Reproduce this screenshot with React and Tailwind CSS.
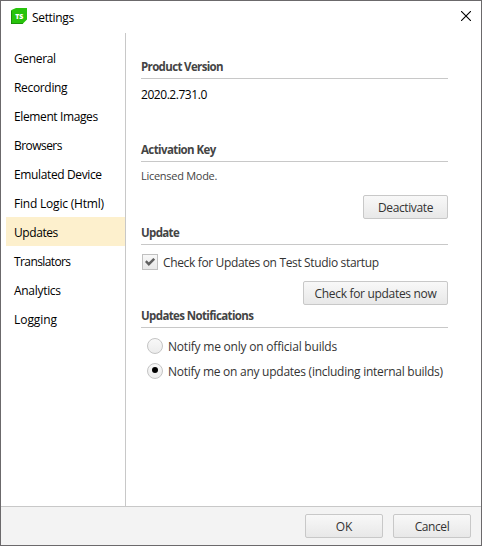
import React from "react";

const NAV = [
  ["General", "tracking-[-0.35px]"],
  ["Recording", "tracking-[-0.33px]"],
  ["Element Images", "tracking-[-0.38px]"],
  ["Browsers", "tracking-[-0.55px]"],
  ["Emulated Device", "tracking-[-0.37px]"],
  ["Find Logic (Html)", "tracking-[-0.2px]"],
  ["Updates", "tracking-[-0.42px]"],
  ["Translators", "tracking-[-0.6px]"],
  ["Analytics", "tracking-[-0.3px]"],
  ["Logging", "tracking-[-0.05px]"],
];

function Button({ className, children }) {
  return (
    <button
      className={`flex h-6 items-center justify-center whitespace-nowrap rounded-[2px] border border-[#c8c8c8] bg-linear-to-b from-[#f8f8f8] to-[#e8e8e8] pt-0.5 text-[#333333] ${className}`}
    >
      {children}
    </button>
  );
}

function Section({ title, titleClass, children }) {
  return (
    <section className="h-[83px] w-[307px]">
      <h2 className={`h-[25px] border-b border-[#c8c8c8] pt-px text-[11.5px] leading-[24px] font-bold text-[#444444] ${titleClass}`}>
        {title}
      </h2>
      {children}
    </section>
  );
}

function Radio({ checked, children, className }) {
  return (
    <label className={`flex h-[25px] items-center gap-[5px] pl-1.5 text-[#333333] ${className}`}>
      <span className="flex size-4 shrink-0 items-center justify-center rounded-full border border-[#c4c4c4] bg-linear-to-b from-[#f8f8f8] to-[#ececec]">
        {checked && <span className="mb-0.5 size-1.5 rounded-full bg-black" />}
      </span>
      <span className="pt-0.5">{children}</span>
    </label>
  );
}

export default function App() {
  return (
    <div className="flex h-[546px] w-[482px] flex-col overflow-hidden border border-[#6b696b] bg-white font-['Open_Sans','Noto_Sans',sans-serif] text-[12px] leading-[16px] whitespace-nowrap text-black">
      <header className="flex h-8 shrink-0 items-center pr-[10px] pl-[10px]">
        <svg width="16" height="16" viewBox="0 0 16 16" className="-mt-0.5">
          <path d="M5 0H16V11.5L11.5 16H0V3Q0 2 1 1.7Z" fill="#28c30c" />
          <path d="M0 3L.8 2.5V15.2H12.3L11.5 16H0Z" fill="#168507" />
          <text x="8.3" y="10.8" textAnchor="middle" fontSize="7" fontWeight="800" fill="white">TS</text>
        </svg>
        <span className="mt-px ml-[5px] tracking-[-0.33px]">Settings</span>
        <svg width="10" height="10" viewBox="0 0 10 10" className="ml-auto -mt-0.5" fill="none" stroke="black" strokeWidth="1.1">
          <path d="M0 0L10 10M10 0L0 10" />
        </svg>
      </header>

      <main className="flex min-h-0 flex-1">
        <nav className="w-[125px] shrink-0 border-r border-[#c8c8c8] pt-[10px] pl-[5px]">
          {NAV.map(([name, tracking]) => (
            <div
              key={name}
              className={`flex h-[29px] items-center pt-0.5 pl-2 ${tracking} ${name === "Updates" ? "bg-[#fdf0cd]" : ""}`}
            >
              {name}
            </div>
          ))}
        </nav>

        <div className="pt-[21px] pl-[15px]">
          <Section title="Product Version" titleClass="tracking-[-0.65px]">
            <p className="mt-2 tracking-[-0.45px]">2020.2.731.0</p>
          </Section>

          <Section title="Activation Key" titleClass="tracking-[-0.6px]">
            <p className="mt-1.5 text-[11px] tracking-[-0.28px] text-[#444444]">Licensed Mode.</p>
            <Button className="mt-[11px] ml-auto w-[85px] tracking-[-0.38px]">Deactivate</Button>
          </Section>

          <Section title="Update" titleClass="tracking-[-0.65px]">
            <label className="mt-[9px] flex h-4 items-center gap-[5px] pl-px text-[#333333]">
              <span className="flex size-4 items-center justify-center border border-[#c0c0c0] bg-linear-to-b from-[#f8f8f8] to-[#e8e8e8]">
                <svg width="10" height="8" viewBox="0 0 10 8" fill="none" stroke="#606060" strokeWidth="2.4">
                  <path d="M.8 3.2L3.8 6.2L9.2 .8" />
                </svg>
              </span>
              <span className="pt-0.5 tracking-[-0.35px]">Check for Updates on Test Studio startup</span>
            </label>
            <Button className="mt-[11px] ml-auto w-[145px] tracking-[-0.31px]">Check for updates now</Button>
          </Section>

          <Section title="Updates Notifications" titleClass="tracking-[-0.62px]">
            <div className="pt-[5px]">
              <Radio className="tracking-[-0.21px]">Notify me only on official builds</Radio>
              <Radio checked className="tracking-[-0.26px]">Notify me on any updates (including internal builds)</Radio>
            </div>
          </Section>
        </div>
      </main>

      <footer className="flex h-[39px] shrink-0 justify-end gap-[10px] border-t border-[#c8c8c8] bg-[#f3f3f3] pt-[7px] pr-[10px]">
        <Button className="w-[78px]">OK</Button>
        <Button className="w-[78px] tracking-[-0.4px]">Cancel</Button>
      </footer>
    </div>
  );
}
